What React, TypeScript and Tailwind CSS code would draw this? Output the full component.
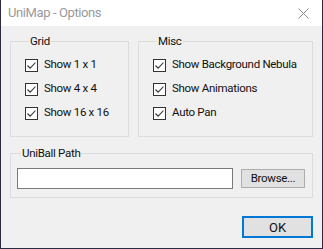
import type { ReactNode } from 'react'

const font = { fontFamily: 'Roboto, "Liberation Sans", sans-serif' }

function CheckBox({ label }: { label: string }) {
  return (
    <label className="flex h-6 items-center gap-[6px] whitespace-nowrap">
      <span className="flex h-[13px] w-[13px] items-center justify-center border border-[#333333] bg-white">
        <svg width="11" height="11" viewBox="0 0 11 11">
          <path d="M1.5 5.5 L4.2 8.2 L9.5 2.5" fill="none" stroke="#333333" strokeWidth="1.1" />
        </svg>
      </span>
      <span className="text-[11.5px] tracking-[-0.3px] text-[#111]">{label}</span>
    </label>
  )
}

function Group({ title, className, children }: { title: string; className: string; children: ReactNode }) {
  return (
    <fieldset className={`border border-[#dcdcdc] ${className}`}>
      <legend className="ml-[4px] px-[1px] text-[11.5px] leading-4 tracking-[-0.3px] text-[#111]">{title}</legend>
      {children}
    </fieldset>
  )
}

export default function App() {
  return (
    <div className="flex h-[249px] w-[323px] flex-col border-x border-b border-[#2c2a42] bg-[#f0f0f0]" style={font}>
      {/* Title bar */}
      <div className="flex h-[26px] items-center justify-between bg-white pl-[7px] pr-[13px]">
        <span className="text-[13px] tracking-[-0.4px] text-[#9a9a9a]">UniMap - Options</span>
        <svg width="11" height="11" viewBox="0 0 11 11">
          <path d="M0.5 0.5 L10.5 10.5 M10.5 0.5 L0.5 10.5" stroke="#8f8f8f" strokeWidth="1" />
        </svg>
      </div>

      <div className="flex flex-col px-[9px] pt-[7px]">
        <div className="flex gap-[9px]">
          <Group title="Grid" className="h-[104px] w-[119px] pl-[14px] pt-[4px]">
            <CheckBox label="Show 1 x 1" />
            <CheckBox label="Show 4 x 4" />
            <CheckBox label="Show 16 x 16" />
          </Group>
          <Group title="Misc" className="h-[104px] w-[175px] pl-[14px] pt-[4px]">
            <CheckBox label="Show Background Nebula" />
            <CheckBox label="Show Animations" />
            <CheckBox label="Auto Pan" />
          </Group>
        </div>

        <Group title="UniBall Path" className="mt-[8px] h-[53px] pl-[6px] pr-[7px] pt-[7px]">
          <div className="flex items-center gap-[8px]">
            <div className="h-[21px] w-[216px] border border-[#7a7a7a] bg-white" />
            <button className="h-[19px] w-[64px] border border-[#adadad] bg-[#e1e1e1] text-[11.5px] tracking-[-0.3px] text-[#111]">
              Browse...
            </button>
          </div>
        </Group>

        <div className="mt-[18px] flex justify-end">
          <button className="h-[22px] w-[71px] border-2 border-[#0078d7] bg-[#e1e1e1] text-[13px] text-[#111]">
            OK
          </button>
        </div>
      </div>
    </div>
  )
}
